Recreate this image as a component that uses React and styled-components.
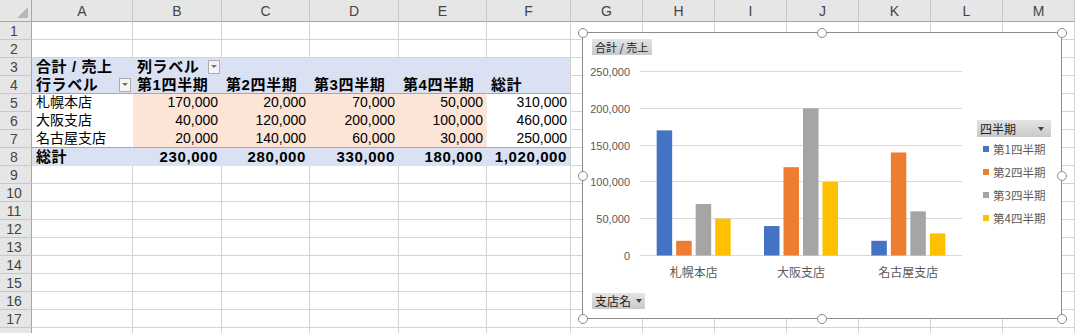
import React from 'react';
import styled, { createGlobalStyle } from 'styled-components';

const GlobalStyle = createGlobalStyle`
  html, body { margin: 0; padding: 0; background: #fff; overflow: hidden; }
  body { font-family: "Liberation Sans", "Noto Sans CJK JP", sans-serif; }
`;

const COLS = [101, 89, 88, 89, 88, 84, 72, 72, 72, 72, 72, 72, 72];
const LETTERS = 'ABCDEFGHIJKLM'.split('');
const ROW_COUNT = 18;
const VISIBLE_LABEL_ROWS = 17;
const GRID = '#D4D4D4';
const HEAD_LINE = '#A6A6A6';
const HEAD_SEP = '#C8C8C8';
const BLUE = '#D9E1F2';
const BLUE_LINE = '#8EA9DB';
const PEACH = '#FCE4D6';

const Sheet = styled.div`
  position: relative;
  display: grid;
  grid-template-columns: 32px ${COLS.map((c) => c + 'px').join(' ')};
  grid-template-rows: 22px repeat(${ROW_COUNT}, 18px);
  width: 1075px;
  height: 333px;
  overflow: hidden;
`;

const Corner = styled.div`
  position: relative;
  box-sizing: border-box;
  background: #e6e6e6;
  border-right: 1px solid ${HEAD_LINE};
  border-bottom: 1px solid ${HEAD_LINE};
  &::after {
    content: '';
    position: absolute;
    right: 3px;
    bottom: 3px;
    width: 0;
    height: 0;
    border-left: 11px solid transparent;
    border-bottom: 11px solid #b8b8b8;
  }
`;

const ColHead = styled.div`
  box-sizing: border-box;
  background: #e6e6e6;
  border-right: 1px solid ${HEAD_SEP};
  border-bottom: 1px solid ${HEAD_LINE};
  display: flex;
  align-items: center;
  justify-content: center;
  font-family: "Liberation Sans", sans-serif;
  font-size: 14px;
  color: #444;
`;

const RowHead = styled.div`
  box-sizing: border-box;
  background: #e6e6e6;
  border-right: 1px solid ${HEAD_LINE};
  border-bottom: 1px solid ${HEAD_SEP};
  display: flex;
  align-items: center;
  justify-content: center;
  padding-right: 3px;
  font-family: "Liberation Sans", sans-serif;
  font-size: 14px;
  color: #444;
`;

const Cell = styled.div`
  box-sizing: border-box;
  display: flex;
  align-items: center;
  justify-content: ${(p) => (p.$right ? 'flex-end' : 'space-between')};
  padding: 0 ${(p) => (p.$filter ? '1px' : '3px')} 0 ${(p) => (p.$right ? '0' : '4px')};
  background: ${(p) => p.$bg || '#fff'};
  border-right: 1px solid ${(p) => p.$br || GRID};
  border-bottom: 1px solid ${(p) => p.$bb || GRID};
  font-family: "Liberation Sans", "Noto Sans CJK JP", sans-serif;
  font-size: ${(p) => (p.$bold ? '15px' : '14px')};
  font-weight: ${(p) => (p.$bold ? 700 : 400)};
  letter-spacing: ${(p) => (p.$bold ? '0.6px' : '0')};
  line-height: 17px;
  color: #000;
  white-space: nowrap;
`;

const FilterBtn = styled.span`
  box-sizing: border-box;
  flex: none;
  width: 12px;
  height: 14px;
  border: 1px solid #adadad;
  background: #f4f4f4;
  display: flex;
  align-items: center;
  justify-content: center;
  &::after {
    content: '';
    width: 0;
    height: 0;
    border-left: 3px solid transparent;
    border-right: 3px solid transparent;
    border-top: 3px solid #6e6e6e;
  }
`;

/* ---------- Chart ---------- */

const ChartFrame = styled.div`
  position: absolute;
  left: 582px;
  top: 32px;
  width: 480px;
  height: 287px;
  box-sizing: border-box;
  border: 1px solid #8c8c8c;
  background: #fff;
  display: flex;
  flex-direction: column;
  padding: 6px 0 9px 9px;
`;

const Handle = styled.span`
  position: absolute;
  left: ${(p) => p.$x};
  top: ${(p) => p.$y};
  width: 10px;
  height: 10px;
  box-sizing: border-box;
  border: 1.5px solid #8a8a8a;
  border-radius: 50%;
  background: #fff;
  transform: translate(-50%, -50%);
`;

const FieldBtn = styled.div`
  box-sizing: border-box;
  width: ${(p) => p.$w}px;
  height: ${(p) => p.$h || 16}px;
  flex: none;
  display: flex;
  align-items: center;
  justify-content: ${(p) => (p.$spread ? 'space-between' : 'flex-start')};
  gap: 5px;
  padding: 0 ${(p) => (p.$spread ? '7px' : '3px')} 0 3px;
  background: linear-gradient(#e4e4e4, #c9c9c9);
  font-family: "Noto Sans CJK JP", sans-serif;
  font-size: ${(p) => p.$fs || 12}px;
  line-height: 1;
  color: #222;
  white-space: nowrap;
`;

const Caret = styled.span`
  width: 0;
  height: 0;
  border-left: 3.5px solid transparent;
  border-right: 3.5px solid transparent;
  border-top: 4px solid #404040;
`;

const ChartMain = styled.div`
  flex: 1;
  display: flex;
  align-items: flex-start;
`;

const PlotSvg = styled.svg`
  flex: none;
  display: block;
  overflow: visible;
`;

const Legend = styled.div`
  display: flex;
  flex-direction: column;
  margin: 65px 0 0 5px;
`;

const LegendItem = styled.div`
  display: flex;
  align-items: center;
  gap: 4px;
  height: 23px;
  padding-left: 6px;
  font-family: "Noto Sans CJK JP", sans-serif;
  font-size: 11.5px;
  color: #595959;
`;

const Swatch = styled.span`
  width: 6px;
  height: 6px;
  background: ${(p) => p.$c};
`;

const SERIES = [
  { name: '第1四半期', color: '#4472C4' },
  { name: '第2四半期', color: '#ED7D31' },
  { name: '第3四半期', color: '#A5A5A5' },
  { name: '第4四半期', color: '#FFC000' },
];

const STORES = [
  { name: '札幌本店', v: [170000, 20000, 70000, 50000] },
  { name: '大阪支店', v: [40000, 120000, 200000, 100000] },
  { name: '名古屋支店', v: [20000, 140000, 60000, 30000] },
];

const fmt = (n) => n.toLocaleString('en-US');

function Chart() {
  const plotL = 48;
  const plotR = 370;
  const base = 200;
  const step = 36.8;
  const catW = (plotR - plotL) / 3;
  const barW = 15.5;
  const barGap = 4;
  const groupW = 4 * barW + 3 * barGap;
  const ticks = [0, 50000, 100000, 150000, 200000, 250000];

  return (
    <ChartFrame>
      <FieldBtn $w={60} $fs={11}>合計 / 売上</FieldBtn>
      <ChartMain>
        <PlotSvg width="380" height="237" viewBox="0 0 380 237">
          {ticks.map((t) => {
            const y = Math.round(base - (t / 50000) * step) + 0.5;
            return (
              <g key={t}>
                <line x1={plotL} x2={plotR} y1={y} y2={y} stroke="#D9D9D9" strokeWidth="1" />
                <text
                  x="38"
                  y={y + 4}
                  textAnchor="end"
                  fontFamily="Liberation Sans, sans-serif"
                  fontSize="11"
                  fill="#595959"
                >
                  {fmt(t)}
                </text>
              </g>
            );
          })}
          {STORES.map((s, i) => {
            const start = plotL + i * catW + (catW - groupW) / 2;
            return (
              <g key={s.name}>
                {s.v.map((v, j) => {
                  const h = (v / 50000) * step;
                  return (
                    <rect
                      key={j}
                      x={start + j * (barW + barGap)}
                      y={base + 0.5 - h}
                      width={barW}
                      height={h}
                      fill={SERIES[j].color}
                    />
                  );
                })}
                <text
                  x={plotL + (i + 0.5) * catW}
                  y="222"
                  textAnchor="middle"
                  fontFamily="Noto Sans CJK JP, sans-serif"
                  fontSize="12"
                  fill="#595959"
                >
                  {s.name}
                </text>
              </g>
            );
          })}
        </PlotSvg>
        <Legend>
          <FieldBtn $w={74} $h={17} $spread>
            四半期
            <Caret />
          </FieldBtn>
          {SERIES.map((s) => (
            <LegendItem key={s.name}>
              <Swatch $c={s.color} />
              {s.name}
            </LegendItem>
          ))}
        </Legend>
      </ChartMain>
      <FieldBtn $w={53}>
        支店名
        <Caret />
      </FieldBtn>
      <Handle $x="-0.5px" $y="-0.5px" />
      <Handle $x="50%" $y="-0.5px" />
      <Handle $x="calc(100% + 0.5px)" $y="-0.5px" />
      <Handle $x="-0.5px" $y="50%" />
      <Handle $x="calc(100% + 0.5px)" $y="50%" />
      <Handle $x="-0.5px" $y="calc(100% + 0.5px)" />
      <Handle $x="50%" $y="calc(100% + 0.5px)" />
      <Handle $x="calc(100% + 0.5px)" $y="calc(100% + 0.5px)" />
    </ChartFrame>
  );
}

/* ---------- Pivot content ---------- */

const TOTALS = [230000, 280000, 330000, 180000, 1020000];

function cellContent(r, c) {
  if (r === 3 && c === 0) return { text: '合計 / 売上', bold: true };
  if (r === 3 && c === 1) return { text: '列ラベル', bold: true, filter: true };
  if (r === 4 && c === 0) return { text: '行ラベル', bold: true, filter: true };
  if (r === 4 && c >= 1 && c <= 4) return { text: SERIES[c - 1].name, bold: true };
  if (r === 4 && c === 5) return { text: '総計', bold: true };
  if (r >= 5 && r <= 7) {
    const s = STORES[r - 5];
    if (c === 0) return { text: s.name };
    if (c >= 1 && c <= 4) return { text: fmt(s.v[c - 1]), right: true };
    if (c === 5) return { text: fmt(s.v.reduce((a, b) => a + b, 0)), right: true };
  }
  if (r === 8) {
    if (c === 0) return { text: '総計', bold: true };
    if (c >= 1 && c <= 5) return { text: fmt(TOTALS[c - 1]), bold: true, right: true };
  }
  return null;
}

function cellStyle(r, c) {
  if (r < 3 || r > 8 || c > 5) return {};
  let bg;
  let bb;
  if (r === 3) {
    bg = BLUE;
    bb = BLUE;
  } else if (r === 4) {
    bg = BLUE;
    bb = BLUE_LINE;
  } else if (r <= 7) {
    bg = c >= 1 && c <= 4 ? PEACH : '#fff';
    bb = r === 7 ? BLUE_LINE : bg;
  } else {
    bg = BLUE;
    bb = BLUE;
  }
  return { $bg: bg, $bb: bb, $br: c === 5 ? GRID : bg };
}

export default function App() {
  const rows = [];
  for (let r = 1; r <= ROW_COUNT; r++) {
    rows.push(<RowHead key={`h${r}`}>{r <= VISIBLE_LABEL_ROWS ? r : ''}</RowHead>);
    for (let c = 0; c < COLS.length; c++) {
      const content = cellContent(r, c);
      const st = cellStyle(r, c);
      rows.push(
        <Cell
          key={`${r}-${c}`}
          {...st}
          $bold={content?.bold}
          $right={content?.right}
          $filter={content?.filter}
        >
          {content && <span>{content.text}</span>}
          {content?.filter && <FilterBtn />}
        </Cell>
      );
    }
  }

  return (
    <>
      <GlobalStyle />
      <Sheet>
        <Corner />
        {LETTERS.map((l) => (
          <ColHead key={l}>{l}</ColHead>
        ))}
        {rows}
        <Chart />
      </Sheet>
    </>
  );
}
